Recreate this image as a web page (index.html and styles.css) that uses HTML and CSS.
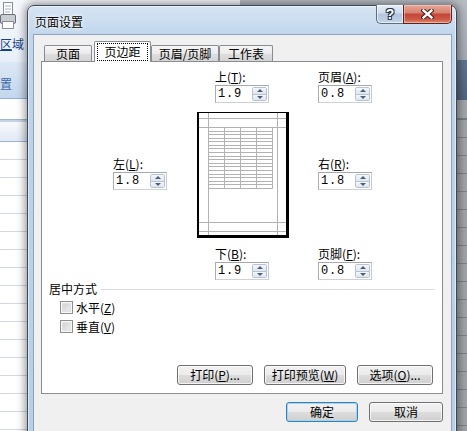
FILE: index.html
```html
<!DOCTYPE html>
<html lang="zh-CN">
<head>
<meta charset="utf-8">
<title>页面设置</title>
<link rel="stylesheet" href="styles.css">
</head>
<body>
<div class="desk">
  <div class="xl-left">
    <div class="ribbon">
      <svg class="printer" width="16" height="30" viewBox="0 0 16 30">
        <rect x="3.5" y="1.5" width="9" height="12" fill="#fff" stroke="#8a8f99"/>
        <path d="M5 5h6M5 8h6M5 11h5" stroke="#9fb1c9"/>
        <rect x="0.5" y="13.5" width="15" height="9" rx="1.5" fill="#c9cdd3" stroke="#6b7079"/>
        <rect x="2.5" y="20.5" width="11" height="7" fill="#fff" stroke="#8a8f99"/>
      </svg>
      <div class="rb-label"><u>区</u>域</div>
    </div>
    <div class="group-band"><span>置</span></div>
    <div class="fbar"></div>
    <div class="colhead"></div>
    <div class="rows"></div>
  </div>
  <div class="xl-right">
    <div class="r-top"></div>
    <div class="r-band"></div>
    <div class="r-mid"></div>
    <div class="r-rows"></div>
  </div>
</div>

<div class="win">
  <div class="titlebar">
    <span class="title">页面设置</span>
    <div class="caps">
      <div class="cap help">?</div>
      <div class="cap close">
        <svg width="13" height="10" viewBox="0 0 13 10">
          <path d="M2.5 1.5 L10.5 8.5 M10.5 1.5 L2.5 8.5" stroke="#4a1a1a" stroke-width="4.4" stroke-linecap="square"/>
          <path d="M2.5 1.5 L10.5 8.5 M10.5 1.5 L2.5 8.5" stroke="#fff" stroke-width="2.4" stroke-linecap="square"/>
        </svg>
      </div>
    </div>
  </div>
  <div class="client">
    <div class="tabs">
      <div class="tab t1">页面</div>
      <div class="tab sel"><span class="focus">页边距</span></div>
      <div class="tab t3">页眉/页脚</div>
      <div class="tab t4">工作表</div>
    </div>
    <div class="panel">
      <div class="margins">
        <div class="field f-top">
          <label>上(<u>T</u>):</label>
          <div class="spin"><span class="val">1.9</span><span class="sp"><i class="up"></i><i class="dn"></i></span></div>
        </div>
        <div class="field f-hd">
          <label>页眉(<u>A</u>):</label>
          <div class="spin"><span class="val">0.8</span><span class="sp"><i class="up"></i><i class="dn"></i></span></div>
        </div>
        <div class="field f-left">
          <label>左(<u>L</u>):</label>
          <div class="spin"><span class="val">1.8</span><span class="sp"><i class="up"></i><i class="dn"></i></span></div>
        </div>
        <svg class="preview" width="93" height="127" viewBox="0 0 93 127">
          <rect x="0" y="0" width="92" height="126" fill="#000"/>
          <rect x="2" y="1" width="87" height="122" fill="#fff"/>
          <g stroke="#b2b2b2" stroke-width="1" fill="none">
            <path d="M11.5 1V123M80.5 1V123M2 6.5H89M2 15.5H89M2 110.5H89M2 119.5H89"/>
            <path d="M27.5 15.5V76.5M43.5 15.5V76.5M59.5 15.5V76.5M75.5 15.5V76.5"/>
            <path d="M11.5 19.5H75.5M11.5 22.5H75.5M11.5 26.5H75.5M11.5 29.5H75.5M11.5 33.5H75.5M11.5 36.5H75.5M11.5 40.5H75.5M11.5 44.5H75.5M11.5 47.5H75.5M11.5 51.5H75.5M11.5 54.5H75.5M11.5 58.5H75.5M11.5 62.5H75.5M11.5 65.5H75.5M11.5 69.5H75.5M11.5 72.5H75.5M11.5 76.5H75.5"/>
          </g>
        </svg>
        <div class="field f-right">
          <label>右(<u>R</u>):</label>
          <div class="spin"><span class="val">1.8</span><span class="sp"><i class="up"></i><i class="dn"></i></span></div>
        </div>
        <div class="field f-bot">
          <label>下(<u>B</u>):</label>
          <div class="spin"><span class="val">1.9</span><span class="sp"><i class="up"></i><i class="dn"></i></span></div>
        </div>
        <div class="field f-ft">
          <label>页脚(<u>F</u>):</label>
          <div class="spin"><span class="val">0.8</span><span class="sp"><i class="up"></i><i class="dn"></i></span></div>
        </div>
      </div>

      <div class="center">
        <div class="center-head">居中方式</div>
        <div class="chk-row"><span class="cb"></span><span>水平(<u>Z</u>)</span></div>
        <div class="chk-row"><span class="cb"></span><span>垂直(<u>V</u>)</span></div>
      </div>

      <div class="pbtns">
        <div class="btn w76">打印(<u>P</u>)...</div>
        <div class="btn w82">打印预览(<u>W</u>)</div>
        <div class="btn w76">选项(<u>O</u>)...</div>
      </div>
    </div>
    <div class="dbtns">
      <div class="btn def w72">确定</div>
      <div class="btn w74">取消</div>
    </div>
  </div>
</div>
</body>
</html>
```

FILE: styles.css
```css
* { box-sizing: border-box; }
html, body { margin: 0; padding: 0; }
body {
  width: 467px;
  height: 431px;
  overflow: hidden;
  position: relative;
  font-family: "Noto Sans CJK SC", "Noto Sans", sans-serif;
  font-size: 12px;
  color: #000;
  background: #fff;
}
u { text-decoration: underline; text-underline-offset: 1px; }

/* ---------- Excel backdrop ---------- */
.desk {
  display: grid;
  grid-template-columns: 240px 1fr;
  height: 431px;
}
.xl-left { display: flex; flex-direction: column; background: #fff; }
.ribbon {
  height: 62px;
  background: linear-gradient(#f6f9fc, #e8eff8);
  padding-top: 1px;
}
.printer { display: block; }
.rb-label {
  color: #15428b;
  line-height: 14px;
  margin-top: 6px;
}
.group-band {
  height: 37px;
  background: linear-gradient(#dde8f5, #c4d7ee);
  border-bottom: 1px solid #8db2e3;
  padding-top: 15px;
  color: #3e6aaa;
  line-height: 14px;
}
.group-band span { margin-left: 0; }
.fbar { height: 21px; background: #fff; border-bottom: 1px solid #9eb6ce; }
.colhead {
  height: 22px;
  border-top: 2px solid #c5d3e5;
  background: linear-gradient(#f7f9fc, #e2eaf6);
  border-bottom: 1px solid #9eb6ce;
}
.rows {
  flex: 1;
  background: repeating-linear-gradient(to bottom, #fff 0 17px, #d0d7e5 17px 18px);
}
.xl-right { display: flex; flex-direction: column; background: #9c9fa3; }
.r-top { height: 60px; background: linear-gradient(#b8bdc4, #a5abb3); }
.r-band { height: 40px; background: linear-gradient(#62758d, #53657c); }
.r-mid { height: 20px; background: #a4a7ab; border-bottom: 2px solid #7b7f85; }
.r-rows {
  flex: 1;
  background: repeating-linear-gradient(to bottom, #a0a3a7 0 17px, #808389 17px 18px);
}

/* ---------- Dialog window ---------- */
.win {
  position: absolute;
  left: 27px;
  top: 5px;
  width: 430px;
  height: 440px;
  border: 1px solid #3d4856;
  border-radius: 7px 7px 0 0;
  background: linear-gradient(180deg, #d6e4f3 0px, #c2d7ed 28px, #bcd2ea 120px, #b7cee8 100%);
  box-shadow: 0 0 9px 2px rgba(0, 0, 0, .42), inset 0 0 0 1px rgba(255, 255, 255, .55);
  display: flex;
  flex-direction: column;
}
.titlebar {
  height: 28px;
  display: flex;
  align-items: flex-start;
  padding-left: 7px;
}
.title {
  margin-top: 8px;
  line-height: 16px;
  text-shadow: 0 0 5px #fff, 0 0 3px #fff;
}
.caps {
  margin-left: auto;
  margin-right: 4px;
  margin-top: -1px;
  display: flex;
}
.cap {
  height: 19px;
  display: flex;
  align-items: center;
  justify-content: center;
}
.help {
  width: 27px;
  border: 1px solid #5c6d84;
  border-top: none;
  border-right: none;
  border-radius: 0 0 0 5px;
  background: linear-gradient(#e4ecf6 0%, #cfdcec 45%, #b3c6dd 50%, #c3d4e8 100%);
  box-shadow: inset 0 0 0 1px rgba(255, 255, 255, .6);
  color: #fff;
  font-family: "Liberation Sans", sans-serif;
  font-weight: bold;
  font-size: 14px;
  line-height: 16px;
  text-shadow: 0 0 1px #1e2c40, 0 0 1px #1e2c40, 1px 1px 0 #2b3a50, -1px -1px 0 #2b3a50, 1px -1px 0 #2b3a50, -1px 1px 0 #2b3a50;
}
.close {
  width: 49px;
  border: 1px solid #5a2222;
  border-top: none;
  border-radius: 0 0 5px 0;
  background: linear-gradient(#e9a797 0%, #d7806e 45%, #c3443a 50%, #cc5a48 80%, #dd8c6e 100%);
  box-shadow: inset 0 0 0 1px rgba(255, 220, 210, .5);
}

.client {
  margin: 0 4px 0 5px;
  flex: 1;
  background: #f0f0f0;
  border: 1px solid #8ea4bd;
  border-bottom: none;
  padding: 6px 8px 0 7px;
}

/* ---------- Tabs ---------- */
.tabs {
  display: flex;
  align-items: flex-end;
  height: 21px;
  margin-bottom: -1px;
  position: relative;
  z-index: 2;
  padding-left: 3px;
}
.tab {
  height: 16px;
  margin-bottom: 1px;
  border: 1px solid #898c95;
  border-bottom: none;
  border-radius: 2px 2px 0 0;
  background: linear-gradient(#f5f5f5, #ebebeb 50%, #dedede 51%, #d4d4d4);
  display: flex;
  align-items: center;
  justify-content: center;
  line-height: 14px;
  white-space: nowrap;
}
.t1 { width: 48px; margin-right: 2px; }
.sel {
  width: 57px;
  height: 21px;
  margin-bottom: 0;
  background: #fff;
}
.t3 { width: 68px; }
.t4 { width: 54px; }
.focus {
  outline: 1px dotted #000;
  padding: 1px 6px;
  line-height: 14px;
}

/* ---------- Panel ---------- */
.panel {
  height: 333px;
  border: 1px solid #898c95;
  background: #fff;
  display: flex;
  flex-direction: column;
  padding-top: 8px;
  position: relative;
  z-index: 1;
}
.margins {
  display: grid;
  grid-template-columns: 54px 30px 94px 27px 54px;
  padding-left: 71px;
  align-items: start;
}
.field { width: 54px; }
.field label { display: block; line-height: 14px; white-space: nowrap; }
.f-top { grid-column: 3; grid-row: 1; margin-left: 18px; }
.f-hd { grid-column: 5; grid-row: 1; }
.f-left { grid-column: 1; grid-row: 2; margin-top: 54px; }
.preview { grid-column: 3; grid-row: 2; margin-top: 9px; display: block; }
.f-right { grid-column: 5; grid-row: 2; margin-top: 54px; }
.f-bot { grid-column: 3; grid-row: 3; margin-top: 8px; margin-left: 18px; }
.f-ft { grid-column: 5; grid-row: 3; margin-top: 8px; }

.spin {
  margin-top: 1px;
  width: 54px;
  height: 18px;
  border: 1px solid;
  border-color: #a4a8b0 #c6cad1 #cdd1d7 #a9adb4;
  background: #fff;
  display: flex;
}
.val {
  flex: 1;
  font-family: "Liberation Mono", monospace;
  font-size: 12px;
  line-height: 16px;
  padding-left: 2px;
  letter-spacing: 0.8px;
}
.sp {
  width: 15px;
  margin: 1px 1px 1px 0;
  display: flex;
  flex-direction: column;
  border: 1px solid #b9c3cf;
  border-radius: 2px;
  overflow: hidden;
}
.sp i {
  flex: 1;
  display: flex;
  align-items: center;
  justify-content: center;
  background: linear-gradient(#f4f7fa, #dfe6ee);
}
.sp i.up { border-bottom: 1px solid #b9c3cf; }
.sp i::before {
  content: "";
  border-left: 3px solid transparent;
  border-right: 3px solid transparent;
}
.sp i.up::before { border-bottom: 3px solid #4b5f7c; }
.sp i.dn::before { border-top: 3px solid #4b5f7c; }

/* ---------- Center section ---------- */
.center { margin-top: 2px; padding-left: 7px; }
.center-head {
  display: flex;
  align-items: center;
  line-height: 14px;
}
.center-head::after {
  content: "";
  flex: 1;
  height: 1px;
  background: #d9dde3;
  margin: 0 7px 0 4px;
}
.chk-row {
  height: 19px;
  display: flex;
  align-items: center;
  padding-left: 11px;
  line-height: 14px;
}
.center-head + .chk-row { margin-top: 2px; }
.cb {
  width: 13px;
  height: 13px;
  margin-right: 3px;
  border: 1px solid #8e8f8f;
  background: linear-gradient(135deg, #cbcbcb, #f3f3f3);
  box-shadow: inset 0 0 0 1px #f7f7f7, inset 0 0 0 2px #e2e2e2;
}

/* ---------- Buttons ---------- */
.pbtns {
  margin-top: auto;
  margin-bottom: 8px;
  display: flex;
  justify-content: flex-end;
  gap: 11px;
  padding-right: 9px;
}
.dbtns {
  display: flex;
  justify-content: flex-end;
  gap: 11px;
  margin-top: 8px;
}
.btn {
  height: 20px;
  border: 1px solid #707070;
  border-radius: 3px;
  background: linear-gradient(#f2f2f2 0%, #ebebeb 48%, #dddddd 52%, #cfcfcf 100%);
  box-shadow: inset 0 0 0 1px rgba(255, 255, 255, .75);
  display: flex;
  align-items: center;
  justify-content: center;
  line-height: 14px;
  white-space: nowrap;
}
.btn.def {
  border-color: #3c7fb1;
  box-shadow: inset 0 0 0 1px #9ed6f5;
}
.w72 { width: 72px; }
.w74 { width: 74px; }
.w76 { width: 76px; }
.w82 { width: 82px; }
```
